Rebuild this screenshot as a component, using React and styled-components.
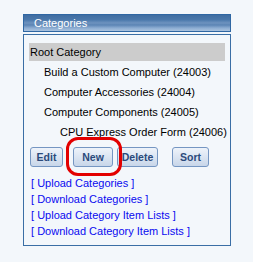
import React from "react";
import styled, { createGlobalStyle } from "styled-components";

const GlobalStyle = createGlobalStyle`
  body {
    margin: 0;
    background: #f3f7fb;
    font-family: "Liberation Sans", Arial, sans-serif;
  }
`;

const Panel = styled.div`
  width: 208px;
  margin: 14px 0 0 23px;
  display: flex;
  flex-direction: column;
  gap: 2px;
`;

const Header = styled.div`
  height: 16px;
  border: 1px solid #2f67a3;
  background: linear-gradient(
    #3f6da2 0%,
    #4a78ab 30%,
    #6e93bf 50%,
    #5b84b4 62%,
    #8eaed3 82%,
    #a9c2de 100%
  );
  color: #fff;
  font-size: 11px;
  line-height: 16px;
  padding-left: 10px;
`;

const Box = styled.div`
  position: relative;
  border: 1px solid #3a6ea5;
  padding: 8px 5px 6px 5px;
  display: flex;
  flex-direction: column;
`;

const Row = styled.div`
  height: ${({ root }) => (root ? "18px" : "20px")};
  margin-bottom: ${({ root }) => (root ? "1px" : "0")};
  line-height: ${({ root }) => (root ? "18px" : "20px")};
  padding-left: ${({ indent }) => indent}px;
  background: ${({ root }) => (root ? "#cccccc" : "transparent")};
  font-size: 11px;
  color: #000;
  white-space: nowrap;
`;

const ButtonRow = styled.div`
  display: flex;
  margin: 5px 0 8px 1px;
`;

const Btn = styled.div`
  width: ${({ w }) => w}px;
  margin-left: ${({ ml }) => ml}px;
  height: 20px;
  box-sizing: border-box;
  border: 1px solid #7596c2;
  border-radius: 3px;
  background: linear-gradient(#eef3fa 0%, #dbe5f2 50%, #c8d6e9 100%);
  color: #2b4a7b;
  font-size: 10.5px;
  font-weight: bold;
  display: flex;
  align-items: center;
  justify-content: center;
`;

const Links = styled.div`
  display: flex;
  flex-direction: column;
  padding-left: 2px;
`;

const Link = styled.a`
  color: #0a0af0;
  font-size: 11px;
  line-height: 16px;
  text-decoration: none;
  white-space: nowrap;
`;

const Circle = styled.div`
  position: absolute;
  left: 42px;
  top: 102px;
  width: 50px;
  height: 33px;
  border: 3px solid #e30000;
  border-radius: 12px;
  pointer-events: none;
`;

const items = [
  { label: "Build a Custom Computer (24003)", indent: 15 },
  { label: "Computer Accessories (24004)", indent: 15 },
  { label: "Computer Components (24005)", indent: 15 },
  { label: "CPU Express Order Form (24006)", indent: 31 },
];

const buttons = [
  { label: "Edit", w: 33, ml: 0 },
  { label: "New", w: 40, ml: 10 },
  { label: "Delete", w: 41, ml: 4 },
  { label: "Sort", w: 37, ml: 14 },
];

const links = [
  "Upload Categories",
  "Download Categories",
  "Upload Category Item Lists",
  "Download Category Item Lists",
];

export default function App() {
  return (
    <>
      <GlobalStyle />
      <Panel>
        <Header>Categories</Header>
        <Box>
          <Row root indent={1}>Root Category</Row>
          {items.map((it) => (
            <Row key={it.label} indent={it.indent}>
              {it.label}
            </Row>
          ))}
          <ButtonRow>
            {buttons.map((b) => (
              <Btn key={b.label} w={b.w} ml={b.ml}>
                {b.label}
              </Btn>
            ))}
          </ButtonRow>
          <Links>
            {links.map((l) => (
              <Link key={l} href="#">
                [ {l} ]
              </Link>
            ))}
          </Links>
          <Circle />
        </Box>
      </Panel>
    </>
  );
}
